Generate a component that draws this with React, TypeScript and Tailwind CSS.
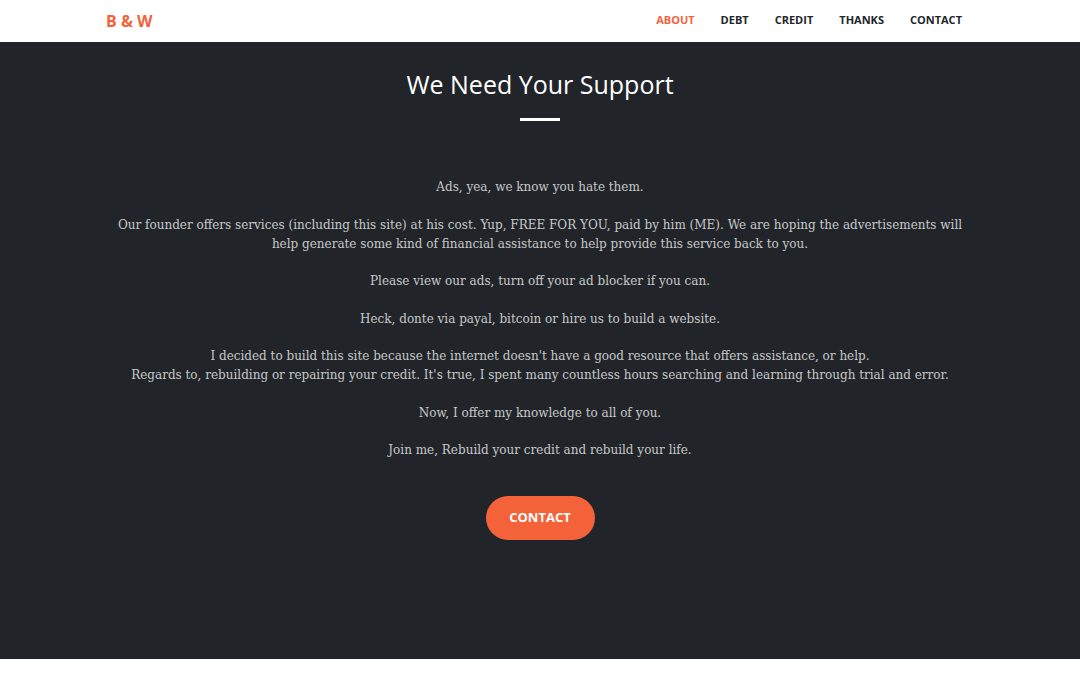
export default function App() {
    const paragraphs = [
        ["Ads, yea, we know you hate them."],
        [
            "Our founder offers services (including this site) at his cost. Yup, FREE FOR YOU, paid by him (ME). We are hoping the advertisements will",
            "help generate some kind of financial assistance to help provide this service back to you.",
        ],
        ["Please view our ads, turn off your ad blocker if you can."],
        ["Heck, donte via payal, bitcoin or hire us to build a website."],
        [
            "I decided to build this site because the internet doesn't have a good resource that offers assistance, or help.",
            "Regards to, rebuilding or repairing your credit. It's true, I spent many countless hours searching and learning through trial and error.",
        ],
        ["Now, I offer my knowledge to all of you."],
        ["Join me, Rebuild your credit and rebuild your life."],
    ];

    return (
        <div className="min-h-[677px] bg-white">
            <nav className="h-[42px] bg-white flex items-center pl-[106px] pr-[118px] pb-[1px] font-['Open_Sans',sans-serif]">
                <a className="text-[16px] font-bold text-[#f4623a]">B &amp; W</a>
                <ul className="ml-auto flex gap-[26px] text-[11px] font-bold uppercase text-[#212529]">
                    <li className="text-[#f4623a]">About</li>
                    <li>Debt</li>
                    <li>Credit</li>
                    <li>Thanks</li>
                    <li>Contact</li>
                </ul>
            </nav>

            <section className="h-[617px] bg-[#212529] pt-[27px] flex flex-col items-center">
                <h2 className="font-['Open_Sans',sans-serif] text-[25px] leading-[30px] text-white">
                    We Need Your Support
                </h2>
                <hr className="mt-[19px] w-[40px] border-0 h-[3px] bg-white" />

                <div className="mt-[57px] text-center font-['DejaVu_Serif',serif] text-[12px] leading-[19px] text-white/75">
                    {paragraphs.map((lines, i) => (
                        <p key={i} className="mb-[18.5px]">
                            {lines.map((l, j) => (
                                <span key={j} className="block">{l}</span>
                            ))}
                        </p>
                    ))}
                </div>

                <button className="mt-[17px] w-[109px] h-[44px] rounded-full bg-[#f4623a] text-white font-['Open_Sans',sans-serif] text-[13px] font-bold uppercase">
                    Contact
                </button>
            </section>
        </div>
    );
}
